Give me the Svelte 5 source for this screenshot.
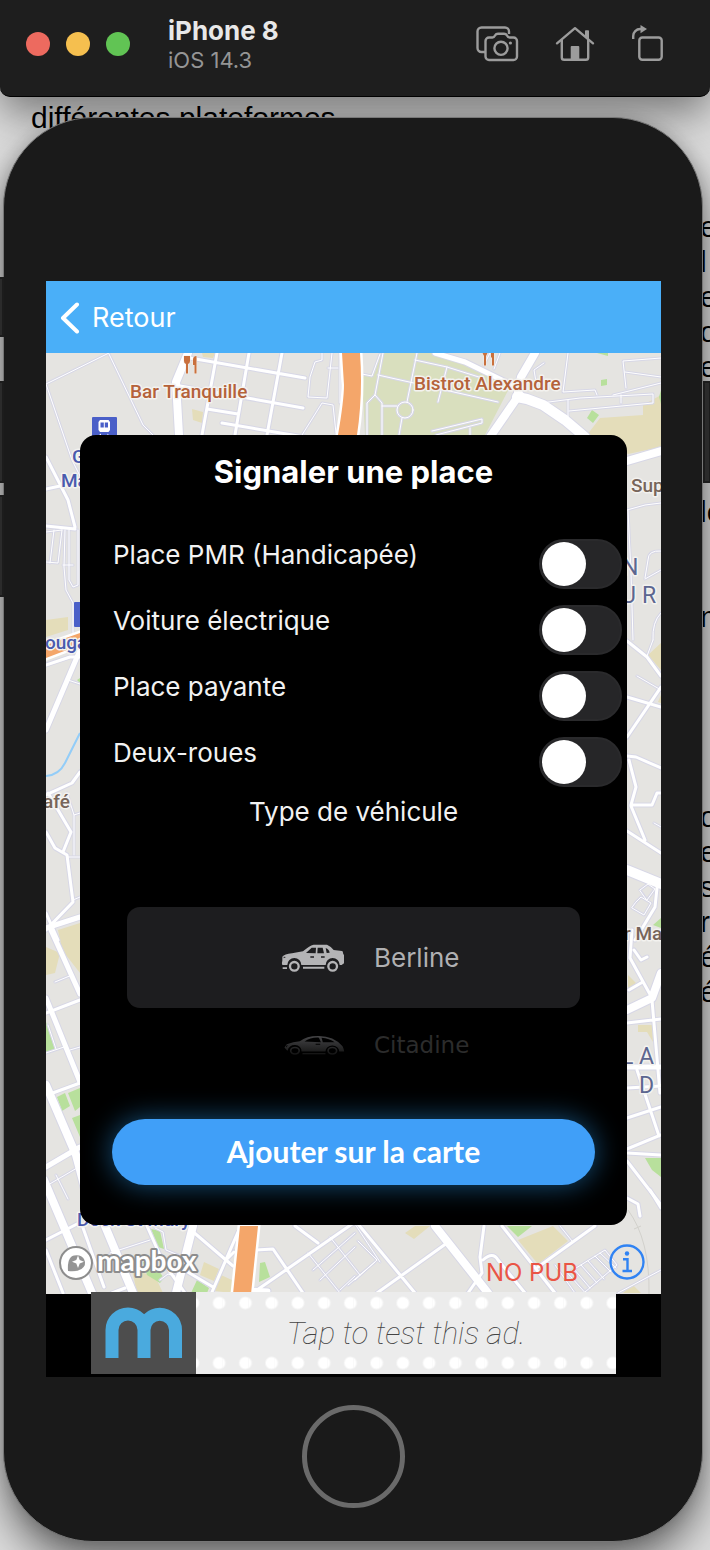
<script>
  let options = $state([
    { id: 'pmr', label: 'Place PMR (Handicapée)', on: false },
    { id: 'electric', label: 'Voiture électrique', on: false },
    { id: 'paid', label: 'Place payante', on: false },
    { id: 'bike', label: 'Deux-roues', on: false }
  ]);
  let vehicle = $state('berline');

  // Paragraphs of the document that lies behind the simulator window
  const notes = [
    ['e', 'l', 'er', 'o', 'e'],
    ['le'],
    ['n'],
    ['o', 'e', 's', 're', 'é', 'é']
  ];

  // Streets, grouped by line width
  const roads = [
    [1, 'M46 384L109 353M109 354L143 425L153 435M46 384L72 460L80 476M322 353V360L315 362L310 377L308 397L327 398L332 353M302 435L322 403L333 405L336 433M340 353V403M328 368H338'],
    [1, 'M65 530L64 567L66 590L73 603V640M69 530V580L73 587L78 585V530M46 562L58 563L62 530M54 530L50 563M63 565H73M46 532L62 530M68 680L80 684M67 793L74 815L80 813M74 815V855M67 857H80M73 900L80 897'],
    [1, 'M383 353L375 395L367 403V435M375 395L382 403V435M382 406H397M402 418L399 435M417 353L407 402M378 375L445 390L498 402M415 360L447 367L482 378M447 367L438 402M432 431L482 419V423L436 435M470 428V435M362 374L372 376L380 354'],
    [1, 'M537 388L534 370L544 363M541 403L580 398L653 394V403L569 411M568 353L563 392L595 390L597 395M661 358L623 361L626 388M613 395L661 383M625 372L661 377M568 400V420M621 395V403M490 353L484 365M500 353L494 369'],
    [1, 'M627 510L645 505L661 503M661 551Q648 550 648 560L645 578M645 579L661 570M628 510L631 573L633 640M661 613Q652 622 653 640M653 640L647 656M637 676L661 690M654 823L661 827M640 890L648 884L655 889L647 900ZM636 902L641 897L651 903L644 915L632 908Z'],
    [1, 'M55 982L72 975M46 1053L64 1047M48 1025L56 1049M70 1050L80 1047M48 1185L77 1168M56 1175L68 1199M110 1253L150 1240M155 1228L163 1232L166 1250L178 1255M160 1280L168 1274L175 1276M308 1253L340 1293M330 1237L360 1275M355 1233L313 1270M355 1247L320 1280M375 1262L348 1285M355 1280L377 1260L358 1241M355 1224L380 1262M340 1290L355 1276'],
    [1, 'M568 1273L605 1250L617 1265L585 1292ZM574 1269L590 1288M581 1265L597 1283M588 1261L604 1279M595 1256L611 1272M600 1253L616 1268M555 1265L575 1293M661 1270L618 1293M560 1226L572 1241'],
    [3, 'M190 358L305 378M180 386L303 408M207 409L238 414M222 423L310 438M217 353L202 435M249 353L235 435M282 353L267 435'],
    [3, 'M46 457L68 500L75 527M46 489L60 486M46 526L75 529M46 665L70 657L80 657M80 772L72 783L46 795M48 793L71 832L63 852M46 832L55 848L67 855L73 902L46 930M46 913L58 940'],
    [3, 'M627 641L647 657L661 676M627 697L661 707M661 687L627 737M627 756L636 757L661 768M629 760L636 787L631 805H652L657 793H661M631 806L645 840M627 831L661 853M657 888L655 907L635 940'],
    [3, 'M632 930L630 958L652 998M634 950L641 960L647 957M629 990L641 983M627 1023L661 1019M652 1000L660 1093M627 1088L661 1086M637 1070L659 1136M627 1118L661 1107M627 1149L661 1135M627 1153L661 1155M627 1161L661 1205M627 1198L638 1204L640 1216'],
    [3, 'M46 1013L80 1000M50 1094L80 1083M46 1240L79 1223M46 1250L63 1293M82 1225L104 1287M112 1293L125 1288M147 1226L163 1262L185 1293M191 1230L233 1266M238 1232L212 1292M186 1271L213 1287M234 1252L226 1260M256 1250L273 1249L303 1293M257 1290L355 1222L370 1212M295 1226L318 1243'],
    [3, 'M358 1224L415 1293M377 1293L447 1243M484 1226L480 1257L482 1273L468 1293M483 1260Q493 1251 498 1260L525 1293M502 1226L555 1293M538 1267L595 1226M650 1190L661 1208'],
    [5, 'M46 928L80 917M51 930L80 994M46 998L80 1082M46 1167L80 1147M627 1067H661M80 650L46 730M435 353L465 362L512 385L522 395M247 1290L268 1291'],
    [8, 'M188 353L176 382L179 435M535 353L521 377L517 398L490 437M627 461L661 451M661 973L652 998L627 1010M46 1085L76 1155L88 1200M44 1180L92 1293M105 1226L133 1293M193 1226L176 1293M435 1226L488 1293'],
    [10, 'M517 397L527 399L543 405L565 420L585 437M627 870L661 884']
  ];

  const sand =
    'M192 409L203 412L202 423L193 420ZM202 353H215L213 358L203 357ZM46 620L68 617V630L46 637ZM643 405L661 395V447L628 454L600 436L587 435L600 418L643 415ZM661 643L648 655L661 670ZM58 930L80 923V973L62 950ZM46 947L60 953L55 973L46 975ZM628 975L636 983L628 990ZM638 1025H652L653 1042L647 1032H638ZM132 1270L155 1276L163 1293H137ZM204 1262L219 1269L214 1281L200 1275ZM221 1275L234 1281L231 1293L215 1291ZM518 1240L553 1226L568 1241L538 1264ZM405 1233L415 1226H430L414 1239ZM623 1293L632 1284L641 1293ZM661 695L658 702L661 703Z';
  const green =
    'M592 410L599 415L593 423L587 418ZM601 380L607 379V385L601 386ZM597 353H608V356ZM661 390L659 397L661 404ZM661 918L653 925L661 928ZM645 1158H661V1177L652 1170ZM46 1022L55 1049L46 1053ZM57 1097L65 1093L70 1106L62 1111ZM68 1093L80 1088V1107L75 1111ZM72 1118L80 1115V1137ZM77 680L80 678V683ZM151 1229L160 1231L164 1249L158 1247ZM143 1262L153 1263L164 1278L160 1283L147 1275ZM197 1280L209 1288L207 1293H191ZM260 1263L265 1262L270 1277L259 1282ZM507 1226H532L518 1237Z';
</script>

<div class="desktop">
  <div class="document" aria-hidden="true">
    <p class="heading">différentes plateformes</p>
    <div class="margin-notes">
      {#each notes as lines}
        <p>{#each lines as line}<span>{line}</span>{/each}</p>
      {/each}
    </div>
  </div>

  <header class="titlebar">
    <div class="lights">
      <button class="red" aria-label="Fermer"></button>
      <button class="yellow" aria-label="Réduire"></button>
      <button class="green" aria-label="Agrandir"></button>
    </div>
    <div class="name">
      <h1>iPhone 8</h1>
      <p>iOS 14.3</p>
    </div>
    <div class="tools">
      <button aria-label="Capture d’écran">
        <svg viewBox="474 24 46 40" width="46" height="40">
          <path d="M485 52H481.500a4 4 0 0 1-4-4V31.500a4 4 0 0 1 4-4H505a4 4 0 0 1 4 4V34" />
          <path d="M489 37.500H492.500Q494 37.500 495 35.500Q496 33.700 498 33.700H504Q506 33.700 507 35.500Q508 37.500 509.500 37.500H513.500a3.500 3.500 0 0 1 3.500 3.500V56.500a3.500 3.500 0 0 1-3.500 3.500H489a3.500 3.500 0 0 1-3.500-3.500V41a3.500 3.500 0 0 1 3.500-3.500Z" />
          <circle cx="501" cy="48.300" r="6.600" />
          <circle class="solid" cx="510.400" cy="43" r="1.600" />
        </svg>
      </button>
      <button aria-label="Accueil">
        <svg viewBox="554 24 42 40" width="42" height="40">
          <path d="M557 43.300L575 28.200L593 43.300" stroke-linecap="round" />
          <path d="M561.800 40V57.500a2.300 2.300 0 0 0 2.300 2.300H585.900a2.300 2.300 0 0 0 2.300-2.300V40" />
          <path class="solid" d="M570.700 60V47a1 1 0 0 1 1-1H578.300a1 1 0 0 1 1 1V60ZM585 36V31a.8.8 0 0 1 .8-.8H588.200a.8.8 0 0 1 .8.8V39.500Z" />
        </svg>
      </button>
      <button aria-label="Rotation">
        <svg viewBox="629 24 34 40" width="34" height="40">
          <rect x="638.300" y="37.500" width="22.400" height="22.200" rx="3" />
          <path d="M632.200 39V36a7 7 0 0 1 7-7H641" />
          <path class="solid" d="M639.500 25L646 29L639.500 33.200Z" />
        </svg>
      </button>
    </div>
  </header>

  <div class="device">
    <i class="key mute"></i>
    <i class="key up"></i>
    <i class="key down"></i>
    <i class="key power"></i>

    <main class="screen">
      <nav class="navbar">
        <button class="back">
          <svg viewBox="0 0 20 32" width="20" height="32"><path d="M17 2.500L3 16L17 29.500" /></svg>
          Retour
        </button>
      </nav>

      <section class="map">
        <svg class="tiles" viewBox="46 353 615 941" preserveAspectRatio="xMidYMid slice" aria-hidden="true">
          <rect x="46" y="353" width="615" height="941" fill="#e5e4e1" />
          <path d="M380 353H440L512 383L485 435H365L362 377L375 372Z" fill="#d9dfbe" />
          <path d={sand} fill="#e4ddba" />
          <path d={green} fill="#b8e09c" />
          <path d="M46 776Q59 775 65 763L80 733" fill="none" stroke="#93cdf8" stroke-width="2" />
          <path d="M628 1210Q650 1240 649 1294M634 1229L641 1226" fill="none" stroke="#d2d1cc" stroke-width="1" />
          <g class="casing">
            {#each roads as [w, d]}<path {d} stroke-width={w + 2} />{/each}
            <circle cx="405" cy="410" r="8" stroke-width="3" />
          </g>
          <g class="road">
            {#each roads as [w, d]}<path {d} stroke-width={w} />{/each}
            <circle cx="405" cy="410" r="8" stroke-width="1" />
          </g>
          <g class="highway">
            <path d="M342 353H360Q363 395 357 435H338Q344 400 344 385ZM46 645L80 633V645L46 658ZM240 1226H258L251 1294H233Z" />
          </g>
          <g fill="#4a5fc8">
            <rect x="92" y="417" width="25" height="26" rx="1" />
            <rect x="74" y="602" width="25" height="25" rx="1" />
          </g>
          <path fill="#fff" fill-rule="evenodd" d="M100 420H108.500L110 422V430L108.500 432H100L98.500 430V422ZM100.500 422.500V427.500H103.800V422.500ZM104.800 422.500V427.500H108V422.500ZM99 435L101 433.500V436ZM107.500 433.500L109.500 436H107.500Z" />
          <g fill="#c9703d" stroke="#f4efe9" stroke-width="1" paint-order="stroke">
            <path d="M184 356H190V361Q190 363.500 188 364V373.500H186V364Q184 363.500 184 361ZM193 365V360Q193 356 196.500 356V373.500H194.500V365Z" />
            <path d="M482.500 353H487.500L486 356V365.500H484V356ZM491 353H494V365.500H492V358L491 357Z" />
          </g>
          <g class="labels">
            <g class="food">
              <text x="130" y="398">Bar Tranquille</text>
              <text x="414" y="390">Bistrot Alexandre</text>
            </g>
            <g class="station">
              <text x="72" y="463">Gare</text>
              <text x="61" y="487">Maire</text>
              <text x="45" y="649">ouga</text>
              <text x="77" y="1226">Dock St Mary</text>
            </g>
            <g class="shop">
              <text x="631" y="492">Sup</text>
              <text x="43" y="808">afé</text>
              <text x="624" y="940">r Ma</text>
            </g>
            <g class="district">
              <text x="622" y="575">N</text>
              <text x="621" y="603">U</text>
              <text x="642" y="603">R</text>
              <text x="621" y="1064">L</text>
              <text x="639" y="1064">A</text>
              <text x="639" y="1093">D</text>
            </g>
          </g>
        </svg>

        <form class="card" onsubmit={(e) => e.preventDefault()}>
          <h2>Signaler une place</h2>
          <div class="options">
            {#each options as option (option.id)}
              <div class="option">
                <label for={option.id}>{option.label}</label>
                <input id={option.id} type="checkbox" role="switch" bind:checked={option.on} />
              </div>
            {/each}
          </div>

          <fieldset>
            <legend>Type de véhicule</legend>
            <label class="vehicle current">
              <input type="radio" name="vehicle" value="berline" bind:group={vehicle} />
              <svg viewBox="32 68 192 88" width="64" height="30" aria-hidden="true">
                <path fill-rule="evenodd" d="M36 133Q33 128 36 120V108Q42 101 65 98L98 92Q116 75 130 72H170Q180 76 190 88L215 91Q219 92 218 98L221 104V128L214 133H208A21 21 0 0 0 166 133H93A21 21 0 0 0 51 133ZM107 97L124 81H137L136 98ZM142 81H157L161 98H141ZM166 82Q176 85 178 96L169 97ZM120 107V111H131V107ZM152 107V111H163V107ZM40 108V113L47 109Z" />
                <path d="M37 140H50V145H37ZM98 138H162V144H98Z" />
                <circle cx="72" cy="137" r="13" />
                <circle cx="187" cy="137" r="13" />
              </svg>
              <span>Berline</span>
            </label>
            <label class="vehicle next">
              <input type="radio" name="vehicle" value="citadine" bind:group={vehicle} />
              <svg viewBox="34 342 192 64" width="64" height="21" aria-hidden="true">
                <defs>
                  <linearGradient id="fade" x1="0" y1="345" x2="0" y2="402" gradientUnits="userSpaceOnUse">
                    <stop offset="0" stop-color="#454547" />
                    <stop offset="1" stop-color="#141414" />
                  </linearGradient>
                </defs>
                <path fill="url(#fade)" fill-rule="evenodd" d="M51 389L43 380L50 370Q70 362 90 361Q110 345 145 345Q192 344 220 376Q224 384 225 392H210A21 18 0 0 0 168 392H95A21 18 0 0 0 53 389ZM104 362Q122 349 148 350L154 364ZM156 350Q180 352 196 364L160 364ZM138 369V372H152V369ZM48 380L54 373L48 375Z" />
                <path fill="url(#fade)" d="M98 397H168V401H98Z" />
                <ellipse cx="75" cy="390" rx="13" ry="10" stroke="url(#fade)" />
                <ellipse cx="189" cy="390" rx="13" ry="10" stroke="url(#fade)" />
              </svg>
              <span>Citadine</span>
            </label>
          </fieldset>

          <button class="submit" type="submit">Ajouter sur la carte</button>
        </form>

        <div class="attribution">
          <svg class="brand" viewBox="0 0 142 38" width="142" height="38" role="img" aria-label="mapbox">
            <circle cx="17" cy="18" r="16" fill="#fff" stroke="#8d8d8d" stroke-width="2" />
            <path d="M9 26Q8 12 15 10.500Q22 9 25 14Q28 20 22.500 24Q18 27 9 26Z" fill="#949494" />
            <path d="M19 10.500L20.700 15L25 16.700L20.700 18.500L19 23L17.300 18.500L13 16.700L17.300 15Z" fill="#fff" />
            <text x="38" y="26">mapbox</text>
          </svg>
          <span class="no-ads">NO PUB</span>
          <button class="info" aria-label="Informations">
            <svg viewBox="0 0 36 36" width="36" height="36">
              <circle cx="18" cy="18" r="16.500" />
              <circle class="dot" cx="18" cy="9.500" r="2.200" />
              <path d="M14 15.300H18.500V27M13.500 27H23" />
            </svg>
          </button>
        </div>
      </section>

      <footer class="ads">
        <a class="banner" href="#ad">
          <span class="logo">
            <svg viewBox="0 0 78 52" width="78" height="52" role="img" aria-label="m">
              <path d="M7 51V23A15.700 15.700 0 0 1 39 23V51M39 23A15.700 15.700 0 0 1 70.500 23V51" />
            </svg>
          </span>
          <span class="copy">Tap to test this ad.</span>
        </a>
      </footer>
    </main>

    <button class="home" aria-label="Bouton principal"></button>
  </div>
</div>

<style>
  :global(body) {
    margin: 0;
    background: #dcdcdc;
  }
  .desktop {
    position: relative;
    overflow: hidden;
    isolation: isolate;
    padding-bottom: 9px;
    font-family: Inter, "Liberation Sans", sans-serif;
  }
  button {
    margin: 0;
    padding: 0;
    border: 0;
    background: none;
    font: inherit;
    color: inherit;
    cursor: pointer;
  }
  svg {
    display: block;
  }

  .document {
    position: absolute;
    inset: 100px 0 0 0;
    font: 30px/35px "Liberation Sans", sans-serif;
    color: #000;
  }
  .document p {
    margin: 0;
  }
  .heading {
    padding-left: 31px;
  }
  .margin-notes {
    display: flex;
    flex-direction: column;
    align-items: flex-end;
    padding-top: 74px;
  }
  .margin-notes p {
    width: 10px;
    margin-bottom: 110px;
  }
  .margin-notes p:nth-child(2) {
    margin-bottom: 70px;
  }
  .margin-notes p:nth-child(3) {
    margin-bottom: 165px;
  }
  .margin-notes span {
    display: block;
    white-space: nowrap;
  }

  .titlebar {
    position: relative;
    display: flex;
    align-items: center;
    height: 97px;
    box-sizing: border-box;
    padding: 0 46px 8px 26px;
    background: #1e1e1e;
    border-bottom: 1px solid #000;
    border-radius: 0 0 10px 10px;
    box-shadow: 0 16px 40px rgba(0, 0, 0, 0.45);
  }
  .lights {
    display: flex;
    gap: 16px;
  }
  .lights button {
    width: 24px;
    height: 24px;
    border-radius: 50%;
  }
  .lights .red {
    background: #ed6a5f;
  }
  .lights .yellow {
    background: #f5bf4f;
  }
  .lights .green {
    background: #61c454;
  }
  .name {
    flex: 1;
    margin-left: 38px;
    padding-top: 2px;
  }
  .name h1,
  .name p {
    margin: 0;
  }
  .name h1 {
    font-size: 26px;
    line-height: 30px;
    font-weight: 700;
    color: #e8e8e8;
  }
  .name p {
    font-size: 22px;
    line-height: 28px;
    color: #959595;
  }
  .tools {
    display: flex;
    gap: 34px;
  }
  .tools svg {
    fill: none;
    stroke: #9c9c9c;
    stroke-width: 2.4;
    stroke-linejoin: round;
  }
  .tools .solid {
    fill: #9c9c9c;
    stroke: none;
  }

  .device {
    position: relative;
    display: flex;
    flex-direction: column;
    align-items: center;
    margin: 20px 7px 0 3px;
    padding: 163px 41px 33px 42px;
    border: 1px solid #777;
    border-radius: 90px;
    background: #1a1a1a;
    box-shadow:
      0 0 16px rgba(0, 0, 0, 0.16),
      0 22px 40px rgba(0, 0, 0, 0.5);
  }
  .key {
    position: absolute;
    box-sizing: border-box;
    width: 8px;
    height: 102px;
    left: -8px;
    background: #2b2b2b;
    border: 2px solid #1c1c1c;
  }
  .mute {
    top: 159px;
    height: 60px;
  }
  .up {
    top: 263px;
  }
  .down {
    top: 377px;
  }
  .power {
    top: 263px;
    left: auto;
    right: -9px;
  }

  .screen {
    align-self: stretch;
    background: #000;
  }
  .navbar {
    display: flex;
    align-items: center;
    height: 72px;
    box-sizing: border-box;
    padding: 2px 0 0 14px;
    background: #4aaff8;
  }
  .back {
    display: flex;
    align-items: center;
    gap: 12px;
    font-size: 27px;
    line-height: 32px;
    color: #fff;
  }
  .back svg {
    fill: none;
    stroke: #fff;
    stroke-width: 4;
    stroke-linecap: round;
    stroke-linejoin: round;
  }

  .map {
    position: relative;
    padding-top: 82px;
    background: #e5e4e1;
  }
  .tiles {
    position: absolute;
    inset: 0;
    width: 100%;
    height: 100%;
  }
  .casing,
  .road {
    fill: none;
    stroke-linejoin: round;
    stroke-linecap: round;
  }
  .casing {
    stroke: #d7d7e6;
  }
  .road {
    stroke: #fff;
  }
  .highway {
    fill: #f4a66a;
    stroke: #fff;
    stroke-width: 5;
    paint-order: stroke;
  }
  .labels {
    font-family: Roboto, "Liberation Sans", sans-serif;
    font-size: 19px;
    font-weight: 500;
    stroke: #f3f2ef;
    stroke-width: 3;
    stroke-linejoin: round;
    paint-order: stroke;
  }
  .food {
    fill: #b5623a;
  }
  .station {
    fill: #4a5aad;
  }
  .shop {
    fill: #77655a;
  }
  .district {
    fill: #5c6690;
    font-size: 23px;
    font-weight: 400;
  }

  .card {
    position: relative;
    margin: 0 34px;
    padding: 15px 0 40px;
    border-radius: 16px;
    background: #000;
    color: #f2f2f2;
    font-size: 26px;
    line-height: 32px;
  }
  .card h2 {
    margin: 0 0 45px;
    font-size: 31px;
    line-height: 44px;
    font-weight: 700;
    text-align: center;
    color: #fff;
  }
  .options {
    display: grid;
    gap: 16px;
  }
  .option {
    display: flex;
    align-items: flex-start;
    justify-content: space-between;
    padding: 0 5px 0 33px;
  }
  .option input {
    appearance: none;
    box-sizing: border-box;
    width: 83px;
    height: 50px;
    margin: 0;
    padding: 1px;
    border: 2px solid #2a2a2c;
    border-radius: 25px;
    background: #262628;
  }
  .option input::before {
    content: "";
    display: block;
    width: 44px;
    height: 44px;
    border-radius: 50%;
    background: #fff;
  }
  .option input:checked {
    background: #32d158;
  }
  .option input:checked::before {
    margin-left: auto;
  }
  fieldset {
    margin: 8px 47px 0;
    padding: 0;
    border: 0;
    min-width: 0;
  }
  legend {
    width: 100%;
    padding: 1px 0 79px;
    text-align: center;
  }
  .vehicle {
    position: relative;
    display: flex;
    align-items: center;
    gap: 29px;
    padding-left: 154px;
  }
  .vehicle input {
    position: absolute;
    opacity: 0;
    margin: 0;
  }
  .current {
    height: 101px;
    border-radius: 13px;
    background: #1d1d1f;
    color: #b0b0b2;
  }
  .current svg {
    fill: #b4b4b6;
  }
  .current circle {
    fill: none;
    stroke: #b4b4b6;
    stroke-width: 7;
  }
  .next {
    margin-top: 21px;
    color: #2c2c2c;
    font-family: "DejaVu Sans", sans-serif;
    font-size: 23px;
  }
  .next ellipse {
    fill: none;
    stroke-width: 5;
  }
  .submit {
    display: block;
    width: calc(100% - 64px);
    height: 66px;
    margin: 58px 32px 0;
    padding-bottom: 2px;
    border-radius: 33px;
    background: #409ff8;
    box-shadow: 0 0 28px rgba(40, 150, 230, 0.55);
    color: #fff;
    font-family: Lato, sans-serif;
    font-size: 30px;
    font-weight: 700;
  }

  .attribution {
    position: relative;
    display: flex;
    align-items: center;
    height: 69px;
    padding: 0 16px 0 13px;
  }
  .brand {
    margin-top: 8px;
    overflow: visible;
  }
  .brand text {
    font-family: Lato, sans-serif;
    font-size: 28px;
    font-weight: 700;
    fill: #fff;
    stroke: #8d8d8d;
    stroke-width: 4;
    stroke-linejoin: round;
    paint-order: stroke;
  }
  .no-ads {
    margin: 26px 31px 0 auto;
    font-size: 24px;
    line-height: 28px;
    color: #ea5545;
  }
  .info {
    margin-top: 4px;
  }
  .info svg {
    fill: none;
    stroke: #3083f3;
    stroke-width: 2.4;
  }
  .info .dot {
    fill: #3083f3;
    stroke: none;
  }

  .ads {
    position: relative;
    height: 83px;
    padding: 0 45px;
  }
  .banner {
    position: relative;
    top: -2px;
    display: flex;
    height: 82px;
    color: #444;
    text-decoration: none;
  }
  .logo {
    display: grid;
    place-items: center;
    width: 105px;
    background: #4d4d4d;
  }
  .logo svg {
    fill: none;
    stroke: #4aaade;
    stroke-width: 13;
  }
  .copy {
    flex: 1;
    display: grid;
    place-items: center;
    background:
      radial-gradient(circle at 23px 11px, #fff 5px, transparent 7px) 0 0 / 26px 22px,
      radial-gradient(circle at -3px 11px, #fff 5px, transparent 7px) 0 0 / 26px 22px,
      radial-gradient(circle at 23px 11px, #fff 5px, transparent 7px) 0 100% / 26px 22px,
      radial-gradient(circle at -3px 11px, #fff 5px, transparent 7px) 0 100% / 26px 22px,
      #ececec;
    background-repeat: round no-repeat;
    font-family: Roboto, sans-serif;
    font-size: 31px;
    font-weight: 100;
    font-style: italic;
  }
  .home {
    box-sizing: border-box;
    width: 103px;
    height: 103px;
    margin-top: 28px;
    border: 5px solid #6a6a6a;
    border-radius: 50%;
  }
</style>
